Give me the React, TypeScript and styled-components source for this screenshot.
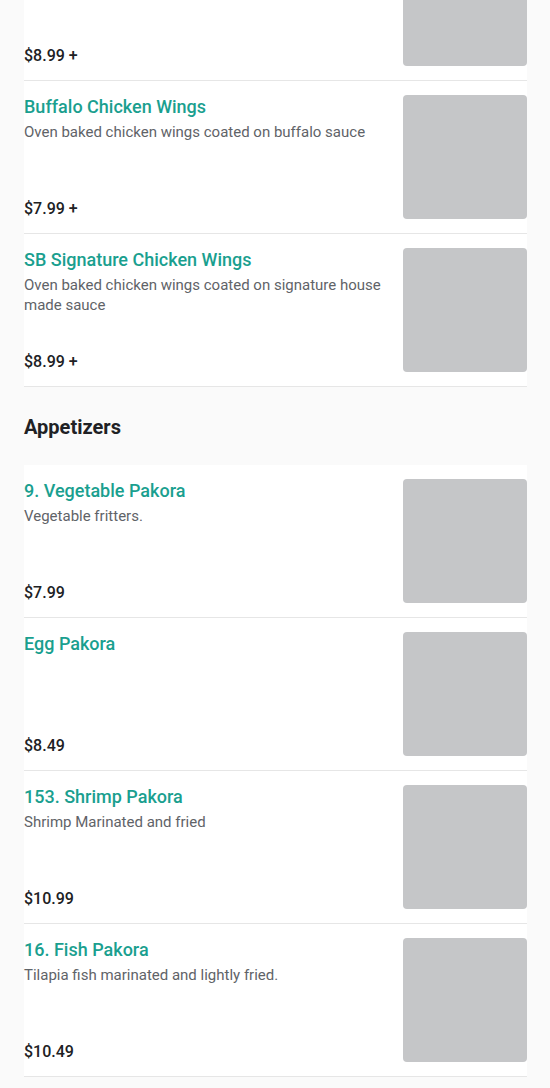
import styled, { createGlobalStyle } from "styled-components";

type Item = {
  title: string;
  description?: string;
  price: string;
};

type Section = {
  name?: string;
  items: Item[];
};

const sections: Section[] = [
  {
    items: [
      {
        title: "Lemon Pepper Chicken Wings",
        description: "Oven baked chicken wings coated on lemon pepper",
        price: "$8.99 +",
      },
      {
        title: "Buffalo Chicken Wings",
        description: "Oven baked chicken wings coated on buffalo sauce",
        price: "$7.99 +",
      },
      {
        title: "SB Signature Chicken Wings",
        description: "Oven baked chicken wings coated on signature house made sauce",
        price: "$8.99 +",
      },
    ],
  },
  {
    name: "Appetizers",
    items: [
      { title: "9. Vegetable Pakora", description: "Vegetable fritters.", price: "$7.99" },
      { title: "Egg Pakora", price: "$8.49" },
      { title: "153. Shrimp Pakora", description: "Shrimp Marinated and fried", price: "$10.99" },
      {
        title: "16. Fish Pakora",
        description: "Tilapia fish marinated and lightly fried.",
        price: "$10.49",
      },
    ],
  },
];

export default function App() {
  return (
    <>
      <GlobalStyle />
      <Menu>
        {sections.map((section, si) => (
          <div key={si}>
            {section.name && <SectionTitle>{section.name}</SectionTitle>}
            <ItemList>
              {section.items.map((item) => (
                <MenuItem key={item.title}>
                  <Info>
                    <div>
                      <ItemTitle>{item.title}</ItemTitle>
                      {item.description && <Description>{item.description}</Description>}
                    </div>
                    <Price>{item.price}</Price>
                  </Info>
                  <Thumb />
                </MenuItem>
              ))}
            </ItemList>
          </div>
        ))}
      </Menu>
    </>
  );
}

const GlobalStyle = createGlobalStyle`
  html, body {
    margin: 0;
    padding: 0;
    background: #fafafa;
    font-family: Roboto, "Liberation Sans", sans-serif;
    overflow: hidden;
  }
`;

// page is scrolled: the first wings item is mostly above the fold
const Menu = styled.main`
  padding: 0 23px 0 24px;
  margin-top: -72px;
`;

const SectionTitle = styled.h2`
  margin: 0;
  padding: 29px 0 27px;
  font-size: 20px;
  line-height: 22px;
  font-weight: 700;
  color: #202124;
`;

const ItemList = styled.div`
  background: #ffffff;
`;

const MenuItem = styled.div`
  display: flex;
  gap: 20px;
  padding: 14px 0;
  border-bottom: 1px solid #e6e6e6;
`;

const Info = styled.div`
  flex: 1;
  min-width: 0;
  height: 124px;
  display: flex;
  flex-direction: column;
  justify-content: space-between;
`;

const ItemTitle = styled.div`
  margin-top: 1px;
  font-size: 18px;
  line-height: 22px;
  font-weight: 500;
  color: #1a9f8f;
`;

const Description = styled.div`
  margin-top: 4px;
  font-size: 15px;
  line-height: 20px;
  color: #5f6368;
`;

const Price = styled.div`
  font-size: 16px;
  line-height: 22px;
  font-weight: 500;
  color: #202124;
  margin-bottom: -1px;
`;

const Thumb = styled.div`
  flex: none;
  width: 124px;
  height: 124px;
  border-radius: 4px;
  background: #c5c6c8;
`;
